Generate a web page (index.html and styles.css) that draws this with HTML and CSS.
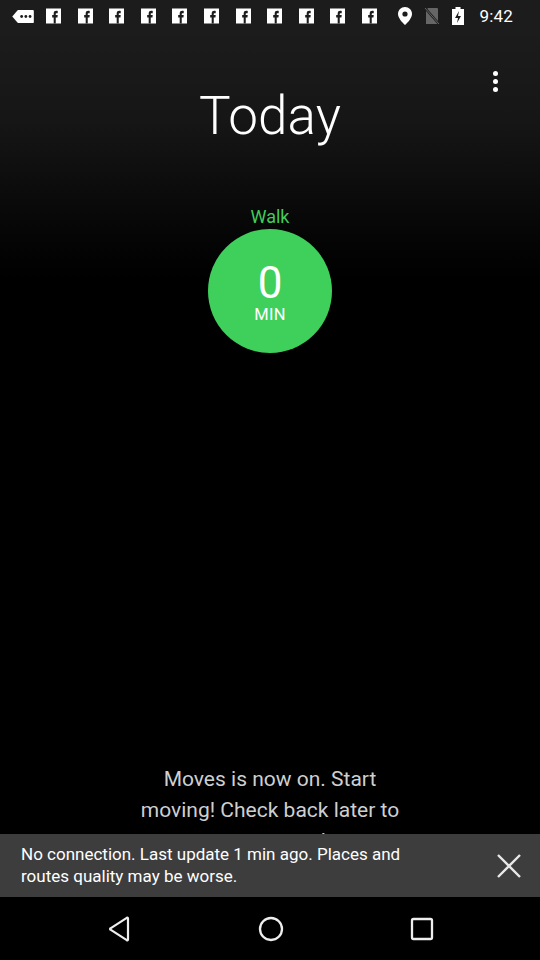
FILE: index.html
```html
<!DOCTYPE html>
<html>
<head>
<meta charset="utf-8">
<link rel="stylesheet" href="styles.css">
</head>
<body>
<div class="screen">
  <div class="statusbar">
    <div class="notifs">
      <svg class="ni-more" width="23" height="15" viewBox="0 0 24 16"><path d="M6 1h16a1 1 0 0 1 1 1v12a1 1 0 0 1-1 1H6L0 8z" fill="#fff"/><circle cx="10" cy="8" r="1.5" fill="#1c1c1c"/><circle cx="14.5" cy="8" r="1.5" fill="#1c1c1c"/><circle cx="19" cy="8" r="1.5" fill="#1c1c1c"/></svg>
      <div class="fbs">
        <svg class="fb" viewBox="0 0 16 16"><rect width="16" height="16" fill="#fff"/><path d="M8.2 16V9.5H6.6V7H8.2V5.2C8.2 3.3 9.3 2.5 11 2.5c.7 0 1.3.1 1.5.1V5h-1.1c-.8 0-1 .4-1 1V7h2.1l-.3 2.5h-1.8V16z" fill="#1c1c1c"/></svg>
        <svg class="fb" viewBox="0 0 16 16"><rect width="16" height="16" fill="#fff"/><path d="M8.2 16V9.5H6.6V7H8.2V5.2C8.2 3.3 9.3 2.5 11 2.5c.7 0 1.3.1 1.5.1V5h-1.1c-.8 0-1 .4-1 1V7h2.1l-.3 2.5h-1.8V16z" fill="#1c1c1c"/></svg>
        <svg class="fb" viewBox="0 0 16 16"><rect width="16" height="16" fill="#fff"/><path d="M8.2 16V9.5H6.6V7H8.2V5.2C8.2 3.3 9.3 2.5 11 2.5c.7 0 1.3.1 1.5.1V5h-1.1c-.8 0-1 .4-1 1V7h2.1l-.3 2.5h-1.8V16z" fill="#1c1c1c"/></svg>
        <svg class="fb" viewBox="0 0 16 16"><rect width="16" height="16" fill="#fff"/><path d="M8.2 16V9.5H6.6V7H8.2V5.2C8.2 3.3 9.3 2.5 11 2.5c.7 0 1.3.1 1.5.1V5h-1.1c-.8 0-1 .4-1 1V7h2.1l-.3 2.5h-1.8V16z" fill="#1c1c1c"/></svg>
        <svg class="fb" viewBox="0 0 16 16"><rect width="16" height="16" fill="#fff"/><path d="M8.2 16V9.5H6.6V7H8.2V5.2C8.2 3.3 9.3 2.5 11 2.5c.7 0 1.3.1 1.5.1V5h-1.1c-.8 0-1 .4-1 1V7h2.1l-.3 2.5h-1.8V16z" fill="#1c1c1c"/></svg>
        <svg class="fb" viewBox="0 0 16 16"><rect width="16" height="16" fill="#fff"/><path d="M8.2 16V9.5H6.6V7H8.2V5.2C8.2 3.3 9.3 2.5 11 2.5c.7 0 1.3.1 1.5.1V5h-1.1c-.8 0-1 .4-1 1V7h2.1l-.3 2.5h-1.8V16z" fill="#1c1c1c"/></svg>
        <svg class="fb" viewBox="0 0 16 16"><rect width="16" height="16" fill="#fff"/><path d="M8.2 16V9.5H6.6V7H8.2V5.2C8.2 3.3 9.3 2.5 11 2.5c.7 0 1.3.1 1.5.1V5h-1.1c-.8 0-1 .4-1 1V7h2.1l-.3 2.5h-1.8V16z" fill="#1c1c1c"/></svg>
        <svg class="fb" viewBox="0 0 16 16"><rect width="16" height="16" fill="#fff"/><path d="M8.2 16V9.5H6.6V7H8.2V5.2C8.2 3.3 9.3 2.5 11 2.5c.7 0 1.3.1 1.5.1V5h-1.1c-.8 0-1 .4-1 1V7h2.1l-.3 2.5h-1.8V16z" fill="#1c1c1c"/></svg>
        <svg class="fb" viewBox="0 0 16 16"><rect width="16" height="16" fill="#fff"/><path d="M8.2 16V9.5H6.6V7H8.2V5.2C8.2 3.3 9.3 2.5 11 2.5c.7 0 1.3.1 1.5.1V5h-1.1c-.8 0-1 .4-1 1V7h2.1l-.3 2.5h-1.8V16z" fill="#1c1c1c"/></svg>
        <svg class="fb" viewBox="0 0 16 16"><rect width="16" height="16" fill="#fff"/><path d="M8.2 16V9.5H6.6V7H8.2V5.2C8.2 3.3 9.3 2.5 11 2.5c.7 0 1.3.1 1.5.1V5h-1.1c-.8 0-1 .4-1 1V7h2.1l-.3 2.5h-1.8V16z" fill="#1c1c1c"/></svg>
        <svg class="fb" viewBox="0 0 16 16"><rect width="16" height="16" fill="#fff"/><path d="M8.2 16V9.5H6.6V7H8.2V5.2C8.2 3.3 9.3 2.5 11 2.5c.7 0 1.3.1 1.5.1V5h-1.1c-.8 0-1 .4-1 1V7h2.1l-.3 2.5h-1.8V16z" fill="#1c1c1c"/></svg>
      </div>
    </div>
    <div class="sys">
      <svg width="14" height="18" viewBox="0 0 14 18"><path d="M7 0C3.1 0 0 3.1 0 7c0 5 7 11 7 11s7-6 7-11c0-3.9-3.1-7-7-7z" fill="#fff"/><circle cx="7" cy="7" r="2.6" fill="#1c1c1c"/></svg>
      <svg width="16" height="18" viewBox="0 0 16 18"><path d="M4 1h9a1 1 0 0 1 1 1v15H2V3z" fill="#666"/><path d="M1 1l14 16" stroke="#1c1c1c" stroke-width="2.4"/><path d="M1 1l14 16" stroke="#666" stroke-width="1"/></svg>
      <svg width="12" height="18" viewBox="0 0 12 18"><rect x="3.5" y="0" width="5" height="2" fill="#fff"/><rect x="0" y="2" width="12" height="16" fill="#fff"/><path d="M7 4L3 11h3l-1 5 4-7H6z" fill="#1c1c1c"/></svg>
      <span class="time">9:42</span>
    </div>
  </div>

  <div class="content">
    <div class="header">
      <h1 class="title">Today</h1>
      <div class="menu"><span></span><span></span><span></span></div>
    </div>

    <div class="activity">
      <div class="act-label">Walk</div>
      <div class="bubble">
        <div class="num">0</div>
        <div class="unit">MIN</div>
      </div>
    </div>

    <div class="message">Moves is now on. Start<br>moving! Check back later to<br>see your results</div>
  </div>

  <div class="snackbar">
    <div class="snack-text">No connection. Last update 1 min ago. Places and routes quality may be worse.</div>
    <svg class="close" width="26" height="26" viewBox="0 0 26 26"><path d="M2 2L24 24M24 2L2 24" stroke="#e8e8e8" stroke-width="2.4"/></svg>
  </div>

  <div class="navbar">
    <svg width="24" height="26" viewBox="0 0 24 26"><path d="M20 2.5v21a.8.8 0 0 1-1.2.7L2.5 13.7a.8.8 0 0 1 0-1.4L18.8 1.8A.8.8 0 0 1 20 2.5z" fill="none" stroke="#eee" stroke-width="2.2" stroke-linejoin="round"/></svg>
    <svg width="26" height="26" viewBox="0 0 26 26"><circle cx="13" cy="13" r="11" fill="none" stroke="#eee" stroke-width="2.3"/></svg>
    <svg width="24" height="24" viewBox="0 0 24 24"><rect x="2" y="2" width="20" height="20" rx="1.5" fill="none" stroke="#eee" stroke-width="2.3"/></svg>
  </div>
</div>
</body>
</html>
```
FILE: styles.css
```css
* { box-sizing: border-box; margin: 0; padding: 0; }
html, body { width: 540px; height: 960px; overflow: hidden; background: #000; }
body { font-family: Roboto, "Noto Sans", sans-serif; color: #fff; }

.screen { width: 540px; height: 960px; display: flex; flex-direction: column; position: relative;
  background: linear-gradient(to bottom, #1e1e1e 0px, #161616 120px, #060606 230px, #000 280px, #000 100%); }

.statusbar { height: 32px; flex: 0 0 32px; background: #1c1c1c; display: flex; align-items: center; justify-content: space-between; padding: 0 27px 0 12px; }
.notifs { display: flex; align-items: center; gap: 11px; }
.ni-more { display: block; margin-top: 1px; }
.fbs { display: flex; gap: 16.6px; }
.fb { width: 15px; height: 16px; display: block; margin-top: 0px; }
.sys { display: flex; align-items: center; gap: 12px; }
.sys svg { display: block; }
.time { font-size: 17px; color: #fff; margin-left: 3px; letter-spacing: 0.2px; }

.content { flex: 1; display: flex; flex-direction: column; align-items: center; overflow: hidden; }
.header { width: 100%; position: relative; display: flex; justify-content: center; padding-top: 52px; }
.title { font-weight: 300; font-size: 53px; line-height: 64px; color: #fff; letter-spacing: 0.1px; }
.menu { position: absolute; right: 42px; top: 39px; display: flex; flex-direction: column; gap: 3px; }
.menu span { width: 5px; height: 5px; border-radius: 50%; background: #fff; display: block; }

.activity { margin-top: 58px; display: flex; flex-direction: column; align-items: center; }
.act-label { color: #3fcc5a; font-size: 18px; line-height: 22px; }
.bubble { width: 124px; height: 124px; border-radius: 50%; background: #3fd05c; margin-top: 1px; padding-top: 3px; display: flex; flex-direction: column; align-items: center; justify-content: center; }
.num { font-size: 44px; line-height: 44px; font-weight: 400; }
.unit { font-size: 16.5px; line-height: 18px; letter-spacing: 0.3px; margin-top: 1px; }

.message { margin-top: auto; margin-bottom: -23px; text-align: center; color: #cfcfcf; font-size: 21px; line-height: 31px; }

.snackbar { height: 63px; flex: 0 0 63px; background: #3d3d3d; display: flex; align-items: center; padding: 0 18px 0 21px; position: relative; z-index: 1; }
.snack-text { flex: 1; font-size: 17px; line-height: 21.5px; color: #fff; padding-right: 45px; }
.close { display: block; }

.navbar { height: 63px; flex: 0 0 63px; background: #000; display: flex; align-items: center; justify-content: center; gap: 126px; padding-left: 1px; }
.navbar svg { display: block; }
```
